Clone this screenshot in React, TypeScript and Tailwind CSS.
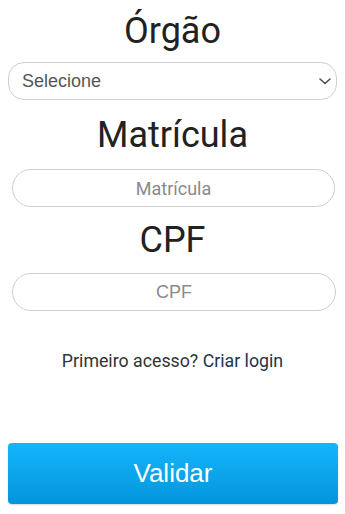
import React from "react";

function FieldTitle({ children }: { children: React.ReactNode }) {
  return (
    <h2 className="text-center font-['Roboto',sans-serif] text-[36px] leading-[42px] font-normal text-[#212121]">
      {children}
    </h2>
  );
}

export default function App() {
  return (
    <div className="min-h-[514px] w-full bg-white px-2 pt-[10px]">
      <FieldTitle>Órgão</FieldTitle>
      <div className="relative mt-[10px]">
        <select
          defaultValue=""
          className="h-[38px] w-full appearance-none rounded-[16px] border border-[#cfcfcf] bg-white pl-[13px] pr-8 font-['Liberation_Sans',Arial,sans-serif] text-[18px] text-[#555] outline-none"
        >
          <option value="">Selecione</option>
        </select>
        <svg
          className="pointer-events-none absolute top-[16px] right-[6px]"
          width="12"
          height="7"
          viewBox="0 0 12 7"
          fill="none"
        >
          <path d="M1 1l5 4.5L11 1" stroke="#4a4a4a" strokeWidth="1.5" strokeLinecap="round" strokeLinejoin="round" />
        </svg>
      </div>

      <div className="mt-[14px]">
        <FieldTitle>Matrícula</FieldTitle>
      </div>
      <input
        type="text"
        placeholder="Matrícula"
        className="mt-[13px] mr-[2px] ml-1 block h-[38px] w-[323px] rounded-full border border-[#cfcfcf] bg-white text-center font-['Roboto',sans-serif] text-[18px] text-[#333] outline-none placeholder:text-[#8a8a8a]"
      />

      <div className="mt-[12px]">
        <FieldTitle>CPF</FieldTitle>
      </div>
      <input
        type="text"
        placeholder="CPF"
        className="mt-[12px] ml-1 block h-[38px] w-[324px] rounded-full border border-[#cfcfcf] bg-white text-center font-['Liberation_Sans',Arial,sans-serif] text-[18px] text-[#333] outline-none placeholder:text-[#8a8a8a]"
      />

      <p className="mt-[38px] text-center font-['Roboto',sans-serif] text-[17.75px] leading-6 text-[#333]">
        Primeiro acesso? <a className="text-[#1b3550]">Criar login</a>
      </p>

      <button
        type="button"
        className="mt-[70px] block h-[61px] w-[330px] rounded-[4px] bg-linear-to-b from-[#15b5fb] to-[#0395dd] font-['Liberation_Sans',Arial,sans-serif] text-[26px] text-white shadow-[0_1px_2px_rgba(0,0,0,0.15)]"
      >
        Validar
      </button>
    </div>
  );
}
